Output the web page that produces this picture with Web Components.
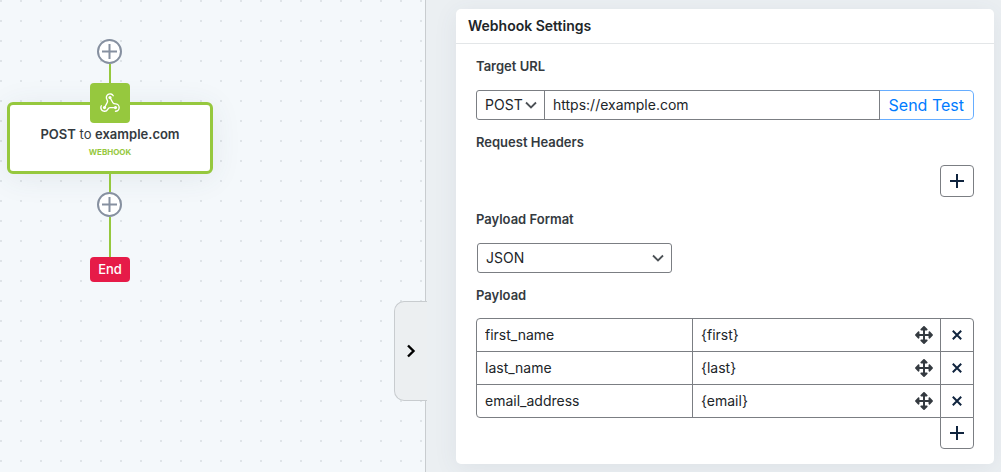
<!DOCTYPE html>
<html lang="en">
<head>
<meta charset="utf-8">
<meta name="viewport" content="width=device-width, initial-scale=1">
<title>Webhook Settings</title>
<style>
  html, body { height: 100%; margin: 0; }
  body {
    font-family: Inter, "Liberation Sans", sans-serif;
    font-size: 14px;
    line-height: 20px;
    color: #212529;
    --green: #96c83e;
    --line: #7b7e83;
    --ink: #10243e;
    --label: #343a40;
  }
</style>
</head>
<body>
<flow-editor>
  <flow-canvas slot="canvas">
    <flow-add></flow-add>
    <flow-edge></flow-edge>
    <flow-node kind="WEBHOOK"><b>POST</b> to <b>example.com</b></flow-node>
    <flow-edge size="short"></flow-edge>
    <flow-add></flow-add>
    <flow-edge size="long"></flow-edge>
    <flow-end>End</flow-end>
  </flow-canvas>
  <settings-panel slot="panel">
    <settings-card>
      <span slot="title">Webhook Settings</span>
      <target-url-field></target-url-field>
      <request-headers-field></request-headers-field>
      <payload-format-field></payload-format-field>
      <payload-field></payload-field>
    </settings-card>
  </settings-panel>
</flow-editor>

<script>
  const reset = `
    *, *::before, *::after { box-sizing: border-box; }
    :host { display: block; box-sizing: border-box; }
    button, input, select { font: inherit; color: inherit; margin: 0; }
    button { cursor: pointer; }
    svg { display: block; }
  `;

  const field = `
    .label { display: block; margin: 0 0 14px; font-size: 13px; font-weight: 600; line-height: 20px; color: var(--label); }
    .label.tight { margin-bottom: 13px; }
    .select { position: relative; display: block; }
    .select select {
      appearance: none; display: block; width: 100%; height: 30px; padding: 0 8px;
      border: 1px solid var(--line); border-radius: 3px; background: #fff; outline: 0;
    }
    .select svg { position: absolute; right: 8px; top: 9px; pointer-events: none; }
    .add {
      display: grid; place-items: center; width: 34px; height: 32px; margin-left: auto; padding: 0;
      border: 1px solid var(--line); border-radius: 4px; background: #fff; color: var(--ink);
    }
  `;

  const chevronDown = `<svg width="12" height="12" viewBox="0 0 12 12" fill="none" stroke="#4c5156" stroke-width="1.8" aria-hidden="true"><path d="M1 3.5l5 5 5-5"/></svg>`;
  const plus = `<svg width="14" height="14" viewBox="0 0 14 14" fill="none" stroke="currentColor" stroke-width="2" aria-hidden="true"><path d="M7 0v14M0 7h14"/></svg>`;

  function define(name, css, html) {
    customElements.define(name, class extends HTMLElement {
      constructor() {
        super();
        const root = this.attachShadow({ mode: "open" });
        root.innerHTML = `<style>${reset}${css}</style>${typeof html === "function" ? html(this) : html}`;
      }
    });
  }

  define("flow-editor", `
    :host { display: grid; grid-template-columns: 425fr 576fr; min-height: 100%; }
  `, `<slot name="canvas"></slot><slot name="panel"></slot>`);

  define("flow-canvas", `
    :host {
      background: radial-gradient(circle at 1px 1px, #dfe4e8 0, #dfe4e8 1px, transparent 1px) 0 0 / 20px 20px #f4f8fb;
      padding: 39px 7px 0; overflow: hidden;
    }
    .track { display: flex; flex-direction: column; align-items: center; width: 206px; }
  `, `<div class="track"><slot></slot></div>`);

  define("flow-add", `
    :host { padding-right: 1px; }
    button {
      display: grid; place-items: center; width: 25px; height: 25px; padding: 0;
      border: 2px solid #8690a0; border-radius: 50%; background: #fff; color: #8690a0;
    }
  `, `<button type="button" aria-label="Add step"><svg width="15" height="15" viewBox="0 0 15 15" stroke="currentColor" stroke-width="2" aria-hidden="true"><path d="M7.5 0v15M0 7.5h15"/></svg></button>`);

  define("flow-edge", `
    :host { width: 2px; height: 19px; background: var(--green); }
    :host([size="short"]) { height: 18px; }
    :host([size="long"]) { height: 40px; }
  `, ``);

  define("flow-node", `
    :host { width: 100%; display: flex; flex-direction: column; align-items: center; }
    .icon {
      z-index: 1; display: grid; place-items: center; width: 40px; height: 40px; margin-bottom: -21px;
      border-radius: 4px; background: var(--green); color: #fff;
    }
    .card {
      width: 100%; height: 72px; padding-top: 19px; text-align: center;
      border: 3px solid var(--green); border-radius: 6px; background: #fff;
      box-shadow: 0 4px 30px rgba(60, 80, 100, .09);
    }
    .title { font-size: 13px; line-height: 20px; color: #343a40; }
    .title ::slotted(b) { font-weight: 600; }
    .kind { font-size: 8px; line-height: 16px; font-weight: 700; color: var(--green); }
  `, host => `
    <div class="icon">
      <svg width="22" height="22" viewBox="0 0 24 24" fill="none" stroke="currentColor" stroke-width="1.5" stroke-linecap="round" stroke-linejoin="round" aria-hidden="true">
        <path d="M18 16.98h-5.99c-1.1 0-1.95.94-2.48 1.9A4 4 0 0 1 2 17c.01-.7.2-1.4.57-2"/>
        <path d="m6 17 3.13-5.78c.53-.97.1-2.18-.5-3.1a4 4 0 1 1 6.89-4.06"/>
        <path d="m12 6 3.13 5.73C15.66 12.7 16.9 13 18 13a4 4 0 0 1 0 8"/>
        <g fill="currentColor" stroke="none"><circle cx="12" cy="6" r="1.7"/><circle cx="6" cy="17" r="1.7"/><circle cx="18" cy="17" r="1.7"/></g>
      </svg>
    </div>
    <div class="card">
      <div class="title"><slot></slot></div>
      <div class="kind">${host.getAttribute("kind")}</div>
    </div>`);

  define("flow-end", `
    :host { padding: 0 8px; border-radius: 4px; background: #e61b48; color: #fff; font-size: 13px; line-height: 25px; font-weight: 500; }
  `, `<slot></slot>`);

  define("settings-panel", `
    :host { position: relative; padding: 9px 7px 8px 30px; border-left: 1px solid #c8cccf; background: #ebeff2; }
    .toggle {
      position: absolute; left: -32px; top: 301px; width: 33px; height: 100px; padding: 0;
      display: grid; place-items: center;
      border: 1px solid #c8cccf; border-right: 0; border-radius: 10px 0 0 10px; background: #eceff1; color: #000;
    }
  `, `
    <button class="toggle" type="button" aria-label="Collapse panel">
      <svg width="10" height="14" viewBox="0 0 10 14" fill="none" stroke="currentColor" stroke-width="2.4" aria-hidden="true"><path d="M2 1.5L7.5 7 2 12.5"/></svg>
    </button>
    <slot></slot>`);

  define("settings-card", `
    :host { border-radius: 5px; background: #fff; box-shadow: 0 4px 24px rgba(60, 80, 100, .08); }
    h2 { margin: 0; padding: 7px 12px; border-bottom: 1px solid #e3e6e8; font-size: 14px; line-height: 20px; font-weight: 600; }
    .body { display: grid; gap: 12px; padding: 12px 20px 15px; }
  `, `<h2><slot name="title"></slot></h2><div class="body"><slot></slot></div>`);

  define("target-url-field", field + `
    .group { display: flex; }
    .method { flex: none; width: 69px; }
    .method select { border-radius: 3px 0 0 3px; }
    input {
      flex: 1; min-width: 0; height: 30px; padding: 0 8px 2px; margin-left: -1px;
      border: 1px solid var(--line); border-radius: 0; background: #fff; outline: 0; position: relative;
    }
    .send {
      height: 30px; padding: 0 9px; border: 1px solid #66adff; border-left: 0; border-radius: 0 5px 5px 0;
      background: #fff; color: #007bff; font-size: 16px; white-space: nowrap;
    }
  `, `
    <label class="label" for="url">Target URL</label>
    <div class="group">
      <span class="select method"><select aria-label="Method"><option>POST</option><option>GET</option><option>PUT</option></select>${chevronDown}</span>
      <input id="url" type="text" value="https://example.com">
      <button class="send" type="button">Send Test</button>
    </div>`);

  define("request-headers-field", field, `
    <div class="label tight">Request Headers</div>
    <button class="add" type="button" aria-label="Add header">${plus}</button>`);

  define("payload-format-field", field + `
    .format { width: 195px; margin-left: 1px; }
  `, `
    <label class="label" for="format">Payload Format</label>
    <span class="select format"><select id="format"><option>JSON</option><option>Form</option></select>${chevronDown}</span>`);

  const move = `<svg width="18" height="18" viewBox="0 0 512 512" fill="#343a40" aria-hidden="true"><path d="M352.201 425.775l-79.196 79.196c-9.373 9.373-24.568 9.373-33.941 0l-79.196-79.196c-15.119-15.119-4.411-40.971 16.971-40.97h51.162L228 284H127.196v51.162c0 21.382-25.851 32.09-40.971 16.971L7.029 272.937c-9.373-9.373-9.373-24.569 0-33.941L86.225 159.8c15.119-15.119 40.971-4.411 40.971 16.971V228H228V127.196h-51.23c-21.382 0-32.09-25.851-16.971-40.971l79.196-79.196c9.373-9.373 24.568-9.373 33.941 0l79.196 79.196c15.119 15.119 4.411 40.971-16.971 40.971h-51.162V228h100.804v-51.162c0-21.382 25.851-32.09 40.97-16.971l79.196 79.196c9.373 9.373 9.373 24.569 0 33.941L425.773 352.2c-15.119 15.119-40.971 4.411-40.97-16.971V284H284v100.804h51.23c21.382 0 32.09 25.851 16.971 40.971z"/></svg>`;
  const cross = `<svg width="10" height="10" viewBox="0 0 10 10" stroke="currentColor" stroke-width="2" aria-hidden="true"><path d="M.8.8l8.4 8.4M9.2.8L.8 9.2"/></svg>`;
  const rows = [["first_name", "{first}"], ["last_name", "{last}"], ["email_address", "{email}"]];

  define("payload-field", field + `
    table {
      width: 100%; table-layout: fixed; border-collapse: separate; border-spacing: 0;
      border: 1px solid var(--line); border-radius: 4px 4px 0 4px;
    }
    .key { width: 215px; }
    .remove { width: 33px; }
    td { height: 33px; padding: 0; border-left: 1px solid var(--line); border-top: 1px solid var(--line); }
    td:first-child { border-left: 0; }
    tr:first-child td { height: 32px; border-top: 0; }
    .cell { display: flex; align-items: center; }
    input { flex: 1; min-width: 0; width: 100%; height: 32px; padding: 0 8px 2px; border: 0; background: transparent; outline: 0; }
    .icon { flex: none; display: grid; place-items: center; height: 32px; width: 32px; padding: 0; border: 0; background: none; color: var(--ink); }
    .icon.move { cursor: move; }
    .add { margin-top: -1px; border-radius: 0 0 4px 4px; }
  `, `
    <div class="label tight" id="payload">Payload</div>
    <table aria-labelledby="payload">
      <colgroup><col class="key"><col><col class="remove"></colgroup>
      <tbody>${rows.map(([k, v]) => `
        <tr>
          <td><div class="cell"><input type="text" aria-label="Key" value="${k}"></div></td>
          <td><div class="cell"><input type="text" aria-label="Value" value="${v}"><button class="icon move" type="button" aria-label="Move">${move}</button></div></td>
          <td><div class="cell"><button class="icon" type="button" aria-label="Remove">${cross}</button></div></td>
        </tr>`).join("")}
      </tbody>
    </table>
    <button class="add" type="button" aria-label="Add payload row">${plus}</button>`);
</script>
</body>
</html>
